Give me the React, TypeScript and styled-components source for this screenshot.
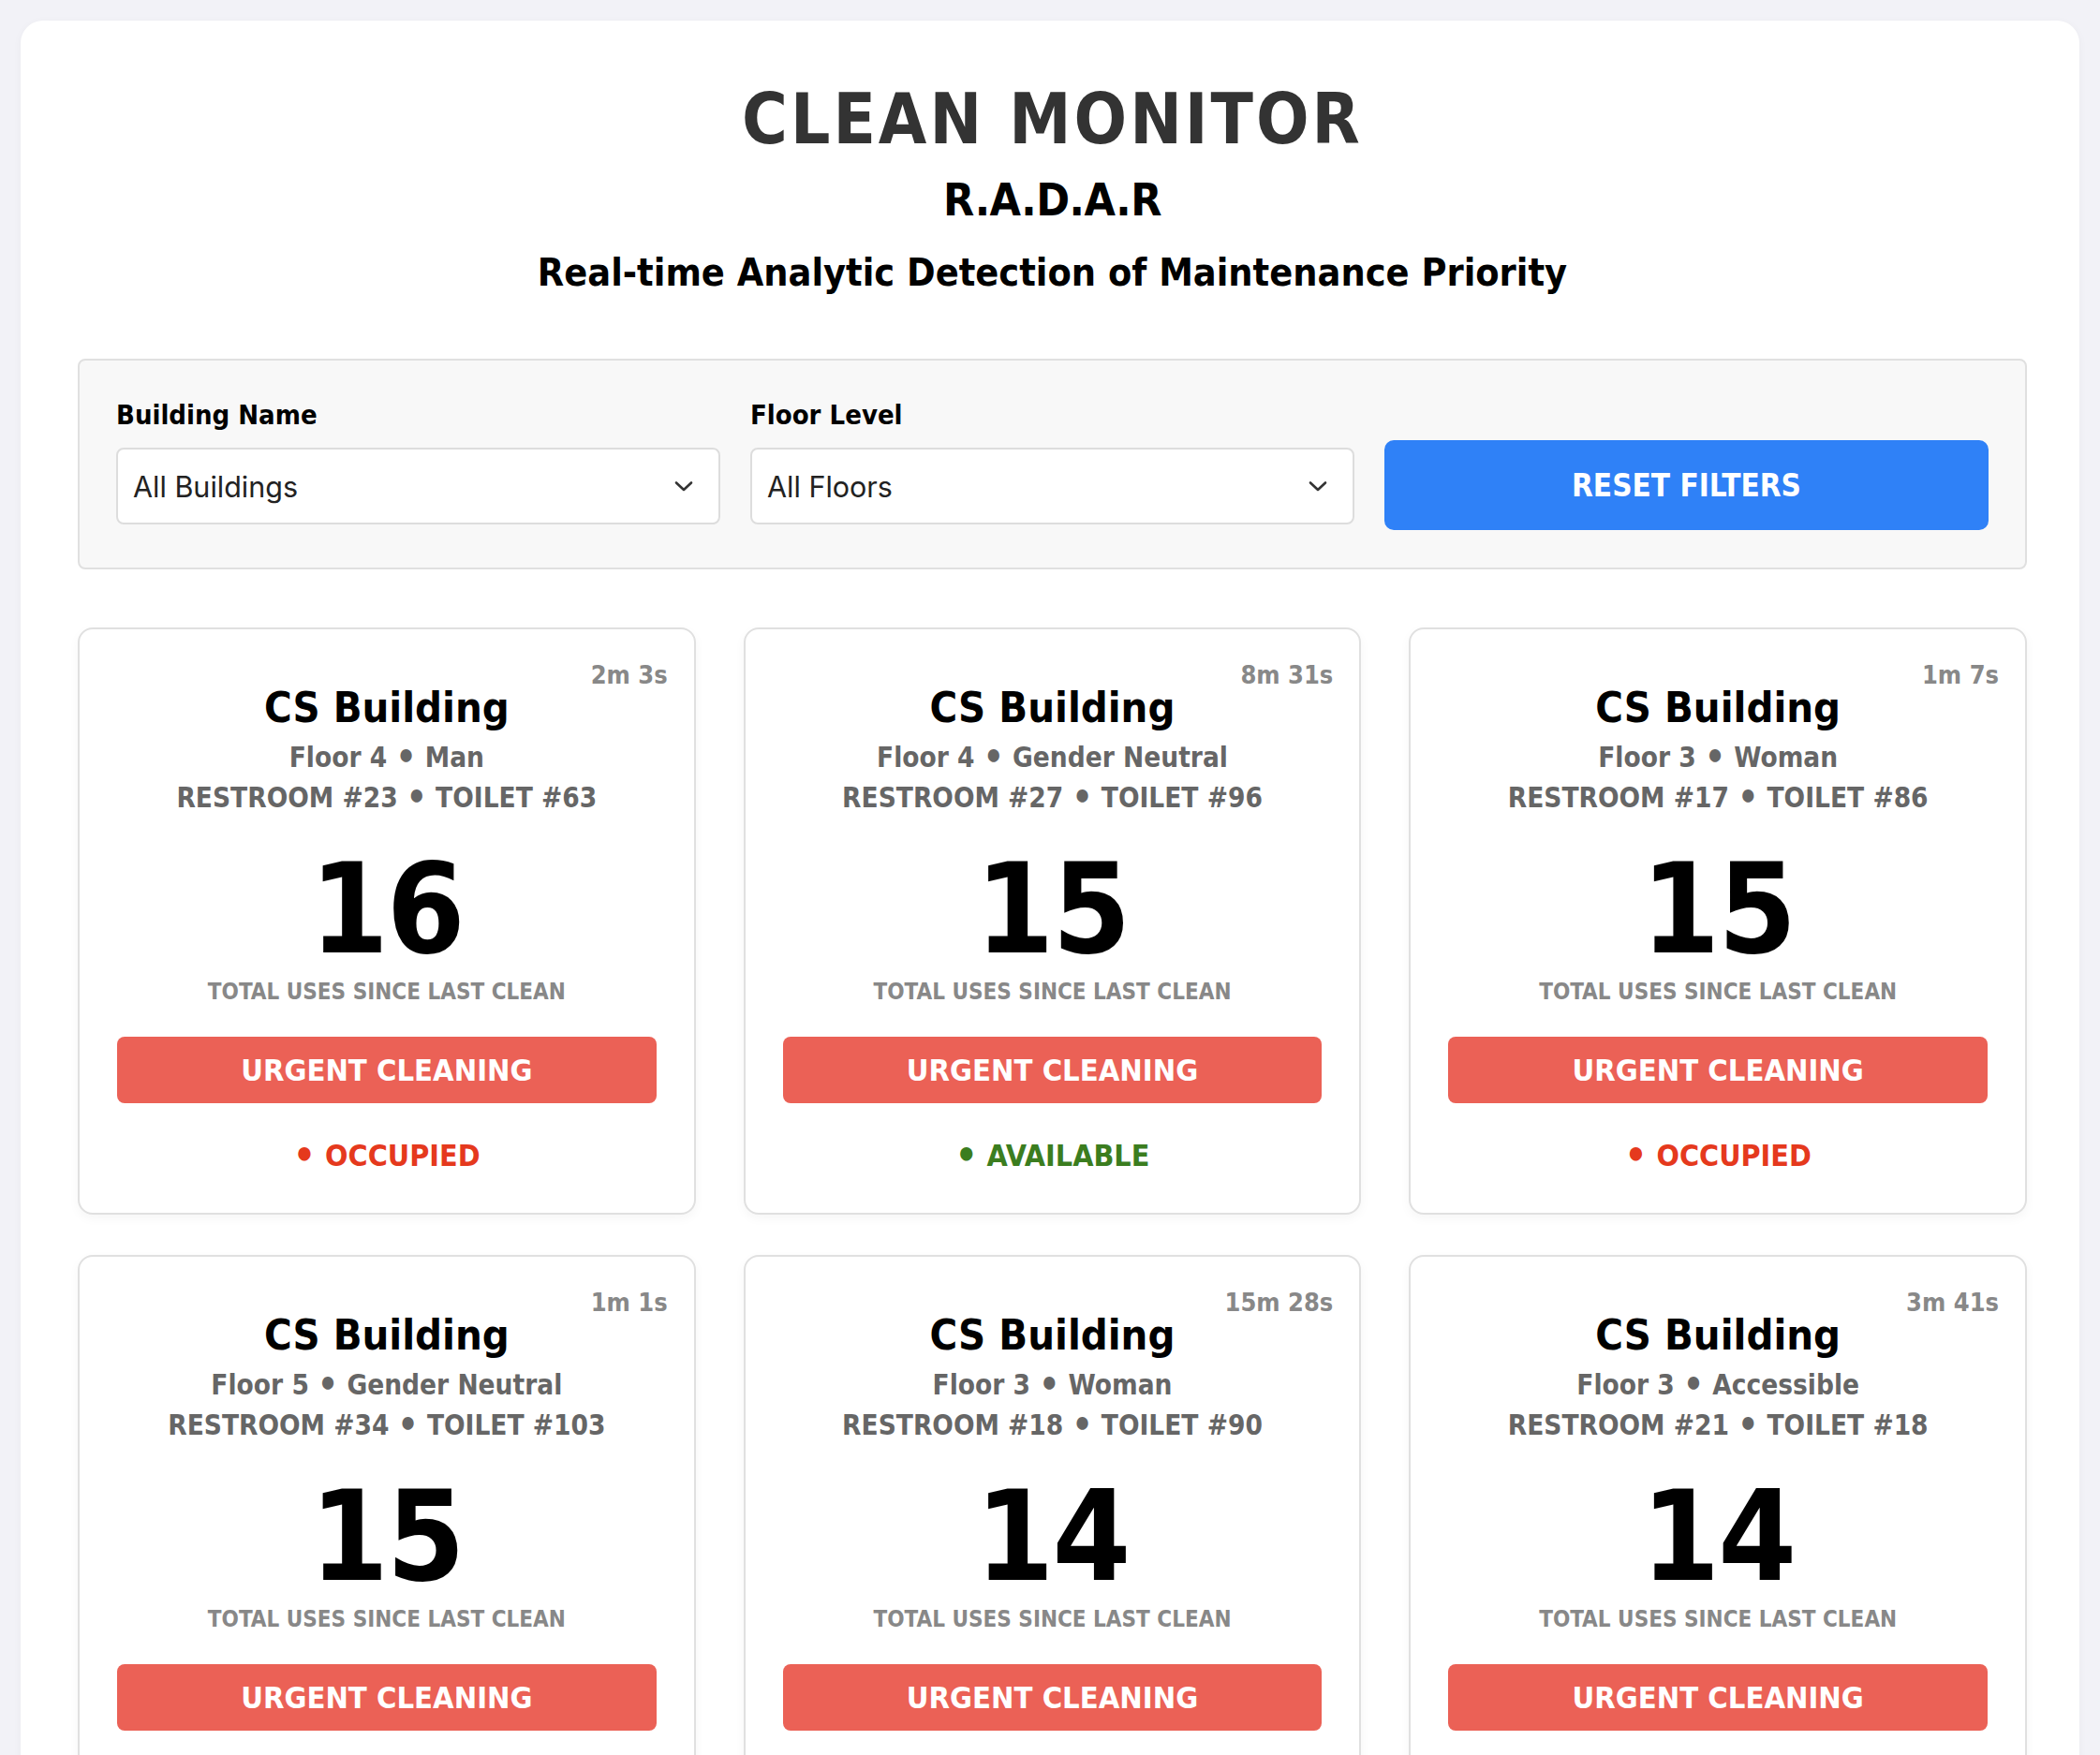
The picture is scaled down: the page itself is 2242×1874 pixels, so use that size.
import React from "react";
import styled, { createGlobalStyle } from "styled-components";

const GlobalStyle = createGlobalStyle`
  html, body {
    margin: 0;
    padding: 0;
    background: #f2f2f7;
  }
  body {
    font-family: "DejaVu Sans Condensed", "DejaVu Sans", sans-serif;
  }
  * { box-sizing: border-box; }
`;

const Page = styled.div`
  padding: 22px;
`;

const Container = styled.main`
  background: #ffffff;
  border-radius: 24px;
  padding: 61px 56px 60px 61px;
  box-shadow: 0 2px 10px rgba(0, 0, 0, 0.04);
`;

const Header = styled.header`
  display: flex;
  flex-direction: column;
  align-items: center;
  text-align: center;
`;

const Title = styled.h1`
  margin: 0;
  font-size: 74px;
  line-height: 88px;
  font-weight: 700;
  letter-spacing: 3px;
  color: #333333;
`;

const Acronym = styled.h2`
  margin: 14px 0 0;
  font-size: 48px;
  line-height: 56px;
  font-weight: 700;
  letter-spacing: -0.5px;
  color: #000000;
`;

const Subtitle = styled.h3`
  margin: 26px 0 0;
  font-size: 41px;
  line-height: 48px;
  font-weight: 700;
  color: #000000;
`;

const FilterPanel = styled.section`
  margin-top: 68px;
  background: #f8f8f8;
  border: 2px solid #e0e0e0;
  border-radius: 8px;
  padding: 40px 39px;
  display: grid;
  grid-template-columns: repeat(3, 1fr);
  column-gap: 32px;
  align-items: end;
`;

const FilterGroup = styled.div`
  display: flex;
  flex-direction: column;
  margin-bottom: 6px;
`;

const FilterLabel = styled.label`
  font-size: 29px;
  line-height: 36px;
  font-weight: 700;
  color: #000000;
  margin-bottom: 17px;
`;

const SelectBox = styled.div`
  height: 82px;
  background: #ffffff;
  border: 2px solid #dddddd;
  border-radius: 8px;
  padding: 0 26px 0 16px;
  display: flex;
  align-items: center;
  justify-content: space-between;
  font-family: "Inter", "Liberation Sans", sans-serif;
  font-size: 30.5px;
  color: #222222;
`;

const Chevron = styled.svg`
  width: 22px;
  height: 14px;
  flex: none;
`;

const ResetButton = styled.button`
  height: 96px;
  border: none;
  border-radius: 10px;
  background: #2f81f7;
  color: #ffffff;
  font-family: inherit;
  font-size: 33px;
  font-weight: 700;
  text-transform: uppercase;
  cursor: pointer;
`;

const CardGrid = styled.section`
  margin-top: 62px;
  display: grid;
  grid-template-columns: repeat(3, 1fr);
  column-gap: 51px;
  row-gap: 43px;
`;

const Card = styled.article`
  position: relative;
  background: #ffffff;
  border: 2px solid #e0e0e0;
  border-radius: 16px;
  padding: 58px 40px 41px;
  display: flex;
  flex-direction: column;
  align-items: center;
  text-align: center;
  box-shadow: 0 4px 12px rgba(0, 0, 0, 0.04);
`;

const Elapsed = styled.span`
  position: absolute;
  top: 33px;
  right: 28px;
  font-size: 27px;
  line-height: 32px;
  font-weight: 700;
  color: #888888;
`;

const BuildingName = styled.h4`
  margin: 0;
  font-size: 45px;
  line-height: 52px;
  font-weight: 700;
  color: #000000;
`;

const InfoLine = styled.div<{ $first?: boolean }>`
  margin-top: ${(p) => (p.$first ? "6px" : "0")};
  font-size: 29.5px;
  line-height: 43px;
  font-weight: 700;
  color: #666666;
`;

const Bullet = styled.span`
  font-size: 1.3em;
  line-height: 0;
  vertical-align: -0.04em;
`;

const UseCount = styled.div`
  margin-top: 27px;
  font-size: 134px;
  line-height: 140px;
  font-weight: 700;
  letter-spacing: -2px;
  color: #000000;
`;

const UseLabel = styled.div`
  margin-top: 3px;
  font-size: 24px;
  line-height: 30px;
  font-weight: 700;
  color: #888888;
  text-transform: uppercase;
`;

const PriorityBadge = styled.div`
  margin-top: 33px;
  align-self: stretch;
  height: 71px;
  border-radius: 8px;
  background: #eb6156;
  color: #ffffff;
  display: flex;
  align-items: center;
  justify-content: center;
  font-size: 32.5px;
  font-weight: 700;
  text-transform: uppercase;
`;

const Status = styled.div<{ $available: boolean }>`
  margin-top: 36px;
  font-size: 32px;
  line-height: 40px;
  font-weight: 700;
  color: ${(p) => (p.$available ? "#3b7d1f" : "#e5391d")};
  text-transform: uppercase;
`;

type Toilet = {
  elapsed: string;
  building: string;
  floor: number;
  type: string;
  restroom: number;
  toilet: number;
  uses: number;
  available: boolean;
};

const toilets: Toilet[] = [
  { elapsed: "2m 3s", building: "CS Building", floor: 4, type: "Man", restroom: 23, toilet: 63, uses: 16, available: false },
  { elapsed: "8m 31s", building: "CS Building", floor: 4, type: "Gender Neutral", restroom: 27, toilet: 96, uses: 15, available: true },
  { elapsed: "1m 7s", building: "CS Building", floor: 3, type: "Woman", restroom: 17, toilet: 86, uses: 15, available: false },
  { elapsed: "1m 1s", building: "CS Building", floor: 5, type: "Gender Neutral", restroom: 34, toilet: 103, uses: 15, available: false },
  { elapsed: "15m 28s", building: "CS Building", floor: 3, type: "Woman", restroom: 18, toilet: 90, uses: 14, available: true },
  { elapsed: "3m 41s", building: "CS Building", floor: 3, type: "Accessible", restroom: 21, toilet: 18, uses: 14, available: false },
];

const ChevronIcon = () => (
  <Chevron viewBox="0 0 22 14" fill="none">
    <path d="M3 3.5 L11 11 L19 3.5" stroke="#333" strokeWidth="2.6" strokeLinecap="round" strokeLinejoin="round" />
  </Chevron>
);

export default function App() {
  return (
    <>
      <GlobalStyle />
      <Page>
        <Container>
          <Header>
            <Title>CLEAN MONITOR</Title>
            <Acronym>R.A.D.A.R</Acronym>
            <Subtitle>Real-time Analytic Detection of Maintenance Priority</Subtitle>
          </Header>

          <FilterPanel>
            <FilterGroup>
              <FilterLabel>Building Name</FilterLabel>
              <SelectBox>
                <span>All Buildings</span>
                <ChevronIcon />
              </SelectBox>
            </FilterGroup>
            <FilterGroup>
              <FilterLabel>Floor Level</FilterLabel>
              <SelectBox>
                <span>All Floors</span>
                <ChevronIcon />
              </SelectBox>
            </FilterGroup>
            <ResetButton>Reset Filters</ResetButton>
          </FilterPanel>

          <CardGrid>
            {toilets.map((t, i) => (
              <Card key={i}>
                <Elapsed>{t.elapsed}</Elapsed>
                <BuildingName>{t.building}</BuildingName>
                <InfoLine $first>
                  Floor {t.floor} <Bullet>•</Bullet> {t.type}
                </InfoLine>
                <InfoLine>
                  RESTROOM #{t.restroom} <Bullet>•</Bullet> TOILET #{t.toilet}
                </InfoLine>
                <UseCount>{t.uses}</UseCount>
                <UseLabel>Total uses since last clean</UseLabel>
                <PriorityBadge>Urgent Cleaning</PriorityBadge>
                <Status $available={t.available}>
                  <Bullet>•</Bullet> {t.available ? "Available" : "Occupied"}
                </Status>
              </Card>
            ))}
          </CardGrid>
        </Container>
      </Page>
    </>
  );
}
